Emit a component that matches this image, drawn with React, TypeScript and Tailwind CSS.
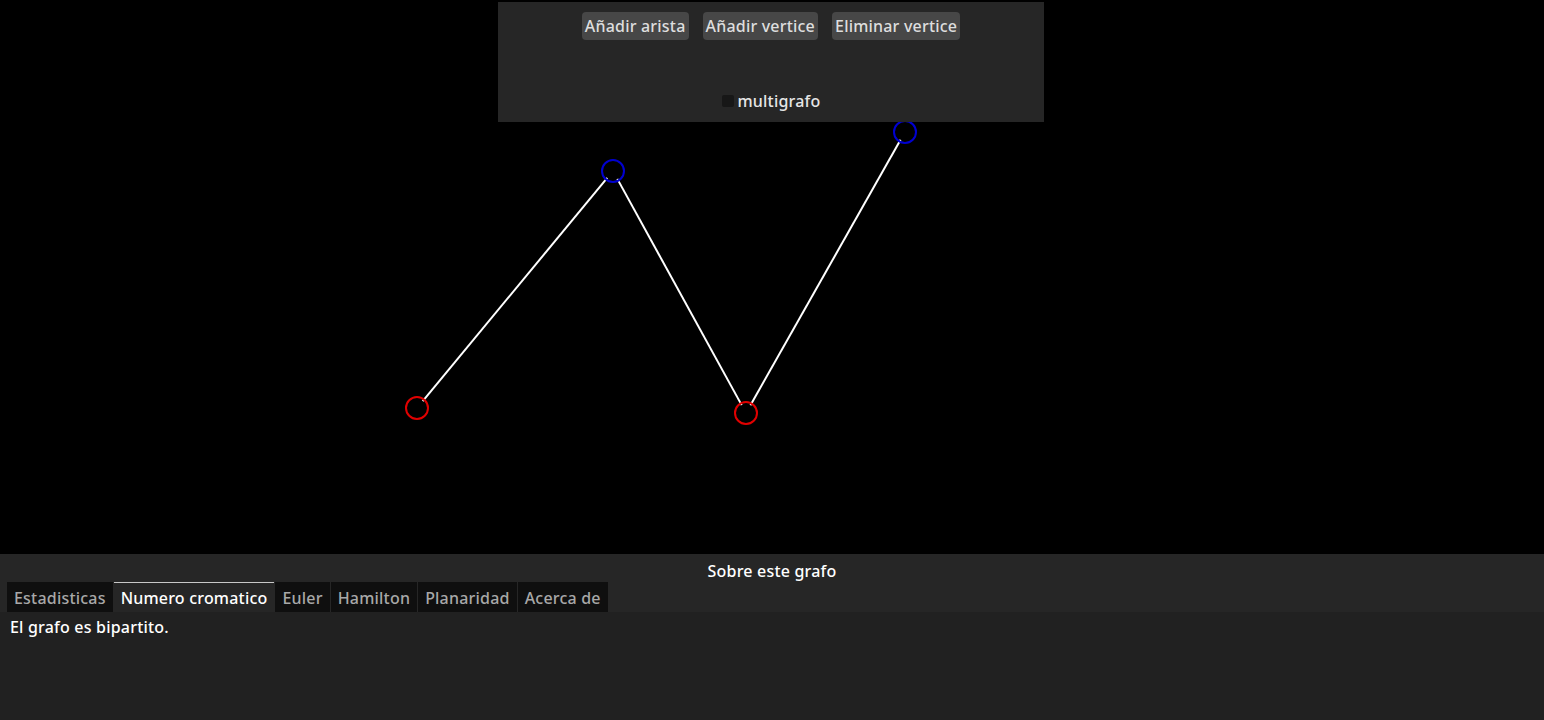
import { useState } from 'react'

type Node = { x: number; y: number; color: string }

const nodes: Node[] = [
  { x: 417, y: 408, color: '#e00000' },
  { x: 613, y: 171, color: '#0000d0' },
  { x: 746, y: 413, color: '#e00000' },
  { x: 905, y: 132, color: '#0000d0' },
]

const edges: [number, number][] = [
  [0, 1],
  [1, 2],
  [2, 3],
]

const tabs = ['Estadisticas', 'Numero cromatico', 'Euler', 'Hamilton', 'Planaridad', 'Acerca de']

function Graph() {
  const r = 11
  return (
    <svg className="absolute inset-0" width="1544" height="554">
      {edges.map(([a, b], i) => {
        const p = nodes[a]
        const q = nodes[b]
        const dx = q.x - p.x
        const dy = q.y - p.y
        const len = Math.hypot(dx, dy)
        const ux = dx / len
        const uy = dy / len
        return (
          <line
            key={i}
            x1={p.x + ux * (r - 2)}
            y1={p.y + uy * (r - 2)}
            x2={q.x - ux * (r - 2)}
            y2={q.y - uy * (r - 2)}
            stroke="#ffffff"
            strokeWidth="2"
          />
        )
      })}
      {nodes.map((n, i) => (
        <circle key={i} cx={n.x} cy={n.y} r={r} fill="none" stroke={n.color} strokeWidth="2" />
      ))}
    </svg>
  )
}

export default function App() {
  const [tab, setTab] = useState(1)
  const [multi, setMulti] = useState(false)

  return (
    <div
      className="flex h-[720px] w-[1544px] flex-col overflow-hidden bg-black text-[16px] font-medium tracking-[0.2px] text-[#e6e6e6]"
      style={{ fontFamily: '"Noto Sans", "Open Sans", sans-serif' }}
    >
      <div className="relative flex-1 bg-black">
        <Graph />
        <div className="absolute left-[498px] top-[2px] flex h-[120px] w-[546px] flex-col items-center bg-[#262626]">
          <div className="mt-[10px] flex gap-[14px]">
            <button className="h-[28px] rounded-[4px] bg-[#474747] px-[3px] leading-none text-[#dedede]">
              Añadir arista
            </button>
            <button className="h-[28px] rounded-[4px] bg-[#474747] px-[3px] leading-none text-[#dedede]">
              Añadir vertice
            </button>
            <button className="h-[28px] rounded-[4px] bg-[#474747] px-[3px] leading-none text-[#dedede]">
              Eliminar vertice
            </button>
          </div>
          <label className="mt-[50px] flex cursor-pointer items-center gap-[4px] text-[#e6e6e6]">
            <span
              onClick={() => setMulti(!multi)}
              className={
                multi
                  ? 'h-[12px] w-[12px] rounded-[2px] bg-[#5a5a5a]'
                  : 'h-[12px] w-[12px] rounded-[2px] bg-[#171717]'
              }
            />
            <span className="leading-[22px]">multigrafo</span>
          </label>
        </div>
      </div>

      <div className="flex h-[166px] flex-col bg-[#262626]">
        <div className="flex h-[28px] items-end justify-center leading-[20px] text-white">
          <span className="-translate-y-[1px]">Sobre este grafo</span>
        </div>
        <div className="flex h-[30px] gap-px pl-[7px]">
          {tabs.map((t, i) => (
            <button
              key={t}
              onClick={() => setTab(i)}
              className={
                i === tab
                  ? 'border-t border-[#c8c8c8] bg-[#262626] px-[7px] pt-[1px] text-white'
                  : 'border-t border-transparent bg-[#0f0f0f] px-[7px] pt-[1px] text-[#a8a8a8]'
              }
            >
              {t}
            </button>
          ))}
        </div>
        <div className="flex-1 bg-[#212121] px-[10px] pt-[3px] text-white">El grafo es bipartito.</div>
      </div>
    </div>
  )
}
